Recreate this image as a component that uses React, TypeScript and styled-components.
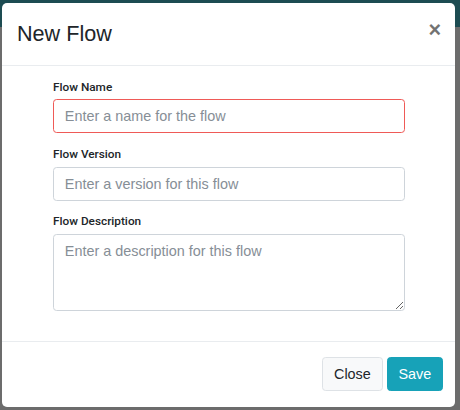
import React from "react";
import styled, { createGlobalStyle } from "styled-components";

const GlobalStyle = createGlobalStyle`
  html, body { margin: 0; padding: 0; }
  body { font-family: "Liberation Sans", Arial, sans-serif; }
  *, *::before, *::after { box-sizing: border-box; }
`;

const Backdrop = styled.div`
  width: 460px;
  height: 410px;
  padding: 3px 5px 3px 2px;
  display: flex;
  align-items: flex-start;
  background: linear-gradient(#1d4c52 0, #1d4c52 27px, #6c6c6c 27px, #6c6c6c 100%);
  overflow: hidden;
`;

const Modal = styled.div`
  width: 453px;
  height: 404px;
  background: #fff;
  border-radius: 5px;
  display: flex;
  flex-direction: column;
  overflow: hidden;
`;

const Header = styled.div`
  height: 63px;
  padding: 0 14px 0 15px;
  display: flex;
  align-items: center;
  justify-content: space-between;
  border-bottom: 1px solid #e9ecef;
`;

const Title = styled.h4`
  margin: 0;
  font-size: 21.6px;
  font-weight: 400;
  line-height: 1.2;
  color: #212529;
`;

const CloseX = styled.button`
  align-self: flex-start;
  margin-top: 16px;
  padding: 0;
  border: 0;
  background: transparent;
  font-family: "Liberation Sans", Arial, sans-serif;
  font-size: 21.6px;
  font-weight: 700;
  line-height: 1;
  color: #000;
  opacity: 0.55;
  cursor: pointer;
`;

const Body = styled.div`
  flex: 1;
  padding: 11.5px 50px 0 51px;
`;

const Group = styled.div`
  display: flex;
  flex-direction: column;
  margin-bottom: 11.7px;
`;

const Label = styled.label`
  font-family: Roboto, "Liberation Sans", sans-serif;
  font-size: 11.8px;
  font-weight: 500;
  line-height: 18px;
  color: #212529;
  margin-bottom: 3.8px;
`;

const fieldBase = `
  width: 100%;
  font-family: "Liberation Sans", Arial, sans-serif;
  font-size: 14.4px;
  line-height: 21.6px;
  color: #495057;
  background: #fff;
  border-radius: 3.6px;
  outline: none;
  &::placeholder { color: #868e96; opacity: 1; }
`;

const Input = styled.input<{ $invalid?: boolean }>`
  ${fieldBase}
  height: 34px;
  padding: 0 10.8px;
  border: 1px solid ${(p) => (p.$invalid ? "#ef5a57" : "#ced4da")};
`;

const TextArea = styled.textarea`
  ${fieldBase}
  display: block;
  height: 77px;
  padding: 5.4px 10.8px;
  border: 1px solid #ced4da;
  resize: vertical;
`;

const Footer = styled.div`
  border-top: 1px solid #e9ecef;
  padding: 15px 12px 16px;
  display: flex;
  justify-content: flex-end;
  gap: 4px;
`;

const Button = styled.button<{ $variant: "light" | "info" }>`
  height: 34px;
  padding: 0 10.8px;
  font-family: "Liberation Sans", Arial, sans-serif;
  font-size: 14.4px;
  line-height: 1;
  border-radius: 3.6px;
  cursor: pointer;
  background: ${(p) => (p.$variant === "info" ? "#17a2b8" : "#f8f9fa")};
  border: 1px solid ${(p) => (p.$variant === "info" ? "#17a2b8" : "#dee2e6")};
  color: ${(p) => (p.$variant === "info" ? "#fff" : "#212529")};
`;

export default function App() {
  return (
    <>
      <GlobalStyle />
      <Backdrop>
        <Modal>
          <Header>
            <Title>New Flow</Title>
            <CloseX aria-label="Close">×</CloseX>
          </Header>
          <Body>
            <Group>
              <Label htmlFor="flow-name">Flow Name</Label>
              <Input id="flow-name" $invalid placeholder="Enter a name for the flow" />
            </Group>
            <Group>
              <Label htmlFor="flow-version">Flow Version</Label>
              <Input id="flow-version" placeholder="Enter a version for this flow" />
            </Group>
            <Group>
              <Label htmlFor="flow-desc">Flow Description</Label>
              <TextArea id="flow-desc" rows={3} placeholder="Enter a description for this flow" />
            </Group>
          </Body>
          <Footer>
            <Button $variant="light">Close</Button>
            <Button $variant="info">Save</Button>
          </Footer>
        </Modal>
      </Backdrop>
    </>
  );
}
